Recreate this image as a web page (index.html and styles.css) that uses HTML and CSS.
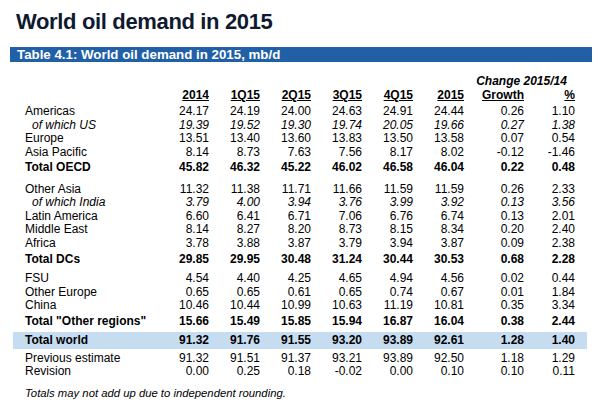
FILE: index.html
```html
<!DOCTYPE html>
<html>
<head>
<meta charset="utf-8">
<link rel="stylesheet" href="styles.css">
</head>
<body>
<h1 class="title">World oil demand in 2015</h1>
<div class="bar">Table 4.1: World oil demand in 2015, mb/d</div>
<div class="table">
  <div class="row change"><span class="change-label">Change 2015/14</span></div>
  <div class="row head">
    <span></span><span><u>2014</u></span><span><u>1Q15</u></span><span><u>2Q15</u></span><span><u>3Q15</u></span><span><u>4Q15</u></span><span><u>2015</u></span><span><u>Growth</u></span><span><u>%</u></span>
  </div>
  <div class="row"><span class="lbl">Americas</span><span>24.17</span><span>24.19</span><span>24.00</span><span>24.63</span><span>24.91</span><span>24.44</span><span>0.26</span><span>1.10</span></div>
  <div class="row it"><span class="lbl">of which US</span><span>19.39</span><span>19.52</span><span>19.30</span><span>19.74</span><span>20.05</span><span>19.66</span><span>0.27</span><span>1.38</span></div>
  <div class="row"><span class="lbl">Europe</span><span>13.51</span><span>13.40</span><span>13.60</span><span>13.83</span><span>13.50</span><span>13.58</span><span>0.07</span><span>0.54</span></div>
  <div class="row"><span class="lbl">Asia Pacific</span><span>8.14</span><span>8.73</span><span>7.63</span><span>7.56</span><span>8.17</span><span>8.02</span><span>-0.12</span><span>-1.46</span></div>
  <div class="row tot t1"><span class="lbl">Total OECD</span><span>45.82</span><span>46.32</span><span>45.22</span><span>46.02</span><span>46.58</span><span>46.04</span><span>0.22</span><span>0.48</span></div>

  <div class="row gap8"><span class="lbl">Other Asia</span><span>11.32</span><span>11.38</span><span>11.71</span><span>11.66</span><span>11.59</span><span>11.59</span><span>0.26</span><span>2.33</span></div>
  <div class="row it"><span class="lbl">of which India</span><span>3.79</span><span>4.00</span><span>3.94</span><span>3.76</span><span>3.99</span><span>3.92</span><span>0.13</span><span>3.56</span></div>
  <div class="row"><span class="lbl">Latin America</span><span>6.60</span><span>6.41</span><span>6.71</span><span>7.06</span><span>6.76</span><span>6.74</span><span>0.13</span><span>2.01</span></div>
  <div class="row"><span class="lbl">Middle East</span><span>8.14</span><span>8.27</span><span>8.20</span><span>8.73</span><span>8.15</span><span>8.34</span><span>0.20</span><span>2.40</span></div>
  <div class="row"><span class="lbl">Africa</span><span>3.78</span><span>3.88</span><span>3.87</span><span>3.79</span><span>3.94</span><span>3.87</span><span>0.09</span><span>2.38</span></div>
  <div class="row tot t2"><span class="lbl">Total DCs</span><span>29.85</span><span>29.95</span><span>30.48</span><span>31.24</span><span>30.44</span><span>30.53</span><span>0.68</span><span>2.28</span></div>

  <div class="row gap6"><span class="lbl">FSU</span><span>4.54</span><span>4.40</span><span>4.25</span><span>4.65</span><span>4.94</span><span>4.56</span><span>0.02</span><span>0.44</span></div>
  <div class="row"><span class="lbl">Other Europe</span><span>0.65</span><span>0.65</span><span>0.61</span><span>0.65</span><span>0.74</span><span>0.67</span><span>0.01</span><span>1.84</span></div>
  <div class="row"><span class="lbl">China</span><span>10.46</span><span>10.44</span><span>10.99</span><span>10.63</span><span>11.19</span><span>10.81</span><span>0.35</span><span>3.34</span></div>
  <div class="row tot t2"><span class="lbl">Total "Other regions"</span><span>15.66</span><span>15.49</span><span>15.85</span><span>15.94</span><span>16.87</span><span>16.04</span><span>0.38</span><span>2.44</span></div>

  <div class="row tot world"><span class="lbl">Total world</span><span>91.32</span><span>91.76</span><span>91.55</span><span>93.20</span><span>93.89</span><span>92.61</span><span>1.28</span><span>1.40</span></div>
  <div class="row prev"><span class="lbl">Previous estimate</span><span>91.32</span><span>91.51</span><span>91.37</span><span>93.21</span><span>93.89</span><span>92.50</span><span>1.18</span><span>1.29</span></div>
  <div class="row"><span class="lbl">Revision</span><span>0.00</span><span>0.25</span><span>0.18</span><span>-0.02</span><span>0.00</span><span>0.10</span><span>0.10</span><span>0.11</span></div>
  <p class="note">Totals may not add up due to independent rounding.</p>
</div>
</body>
</html>
```
FILE: styles.css
```css
* { box-sizing: border-box; }
body {
  margin: 0;
  background: #fff;
  font-family: "Liberation Sans", Arial, sans-serif;
  color: #000;
}
.title {
  margin: 8px 0 0 16px;
  font-size: 22px;
  line-height: 28px;
  font-weight: bold;
  letter-spacing: -0.35px;
  color: #0f1a30;
}
.bar {
  margin: 11px 0 0 10px;
  width: 582px;
  height: 15px;
  padding-left: 7px;
  background: #2160a7;
  color: #fff;
  font-weight: bold;
  font-size: 13.3px;
  line-height: 15px;
}
.table {
  margin: 13px 0 0 13px;
  width: 574px;
  font-size: 12px;
}
.row {
  display: grid;
  grid-template-columns: 145px repeat(6, 51px) 60px 51px 12px;
  height: 13.6px;
  line-height: 13.6px;
  white-space: nowrap;
}
.row > span { text-align: right; }
.row > span.lbl { text-align: left; padding-left: 12px; }
.change { font-style: italic; font-weight: bold; }
.change .change-label {
  grid-column: 8 / 10;
  text-align: center;
  padding-left: 4px;
}
.head { height: 16.5px; font-weight: bold; }
.head u { text-decoration-thickness: 1px; text-underline-offset: 1px; }
.it { font-style: italic; }
.it > span.lbl { padding-left: 19px; }
.tot { font-weight: bold; }
.t1 { margin-top: 2px; }
.t2 { margin-top: 2px; }
.gap8 { margin-top: 7.5px; }
.gap6 { margin-top: 6px; }
.world {
  margin-top: 3.6px;
  height: 17px;
  line-height: 17px;
  background: #c6dcf0;
}
.prev { margin-top: 2.8px; }
.note {
  margin: 7.5px 0 0 12px;
  font-style: italic;
  font-size: 11.3px;
  line-height: 13.6px;
}
```
